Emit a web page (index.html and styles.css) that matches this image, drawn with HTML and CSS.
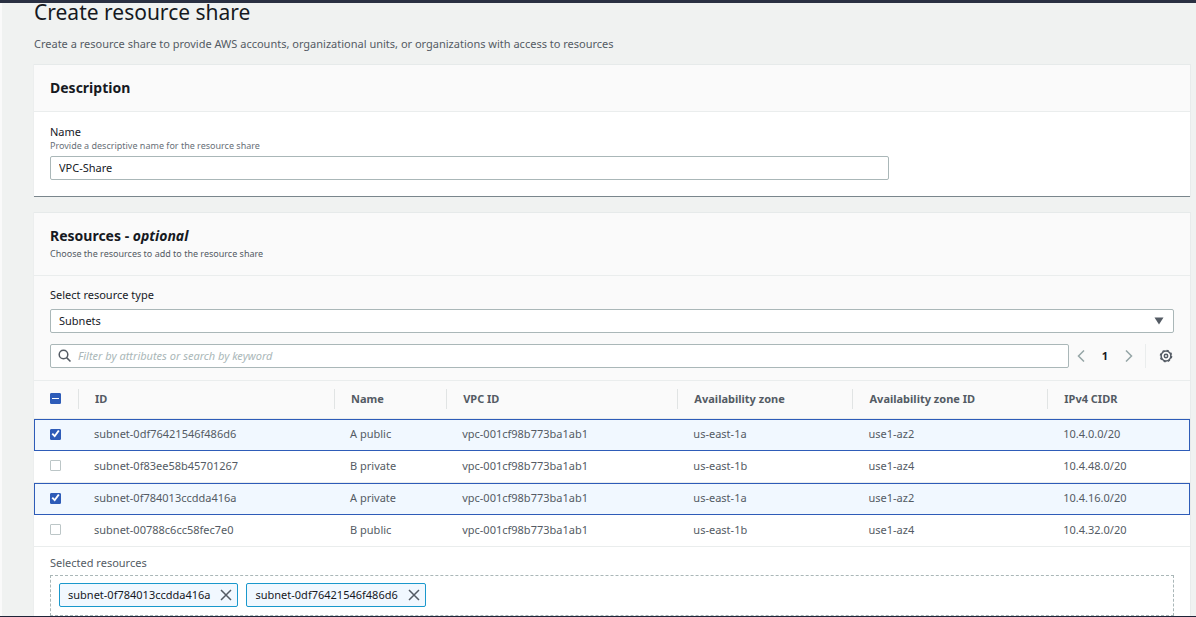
FILE: index.html
```
<!DOCTYPE html>
<html lang="en">
<head>
<meta charset="utf-8">
<title>Create resource share</title>
<link rel="stylesheet" href="styles.css">
</head>
<body>
<main class="page">
  <header class="page-header">
    <h1 class="page-title">Create resource share</h1>
    <p class="page-intro">Create a resource share to provide AWS accounts, organizational units, or organizations with access to resources</p>
  </header>

  <section class="card card-description">
    <div class="card-header">
      <h2 class="card-title">Description</h2>
    </div>
    <div class="card-body">
      <label class="label" for="share-name">Name</label>
      <p class="hint" id="name-hint">Provide a descriptive name for the resource share</p>
      <input class="control name-input" id="share-name" type="text" value="VPC-Share" aria-describedby="name-hint">
    </div>
  </section>

  <section class="card card-resources">
    <div class="card-header card-header-tall">
      <h2 class="card-title">Resources - <em>optional</em></h2>
      <p class="hint hint-dark">Choose the resources to add to the resource share</p>
    </div>
    <div class="tools">
      <label class="label" for="resource-type">Select resource type</label>
      <div class="select-wrap">
        <select class="control select" id="resource-type"><option>Subnets</option></select>
        <svg class="select-arrow" width="10" height="8" viewBox="0 0 10 8" aria-hidden="true"><path d="M.5 .5h9L5 7.500z"/></svg>
      </div>
      <div class="filter-row">
        <div class="search">
          <svg class="search-icon" width="14" height="14" viewBox="0 0 14 14" aria-hidden="true"><circle cx="5.500" cy="5.500" r="4.300"/><path d="M8.600 8.600l3.900 3.900"/></svg>
          <input class="control search-input" type="search" placeholder="Filter by attributes or search by keyword" aria-label="Filter resources">
        </div>
        <nav class="pager" aria-label="Pagination">
          <button class="icon-button arrow" aria-label="Previous page"><svg width="8" height="12" viewBox="0 0 8 12"><path d="M7 .5L1.500 6 7 11.500"/></svg></button>
          <button class="icon-button page-number">1</button>
          <button class="icon-button arrow" aria-label="Next page"><svg width="8" height="12" viewBox="0 0 8 12"><path d="M1 .5L6.500 6 1 11.500"/></svg></button>
        </nav>
        <div class="settings">
          <button class="icon-button gear" aria-label="Preferences"><svg width="14" height="14" viewBox="0 0 14 14"><circle cx="7" cy="7" r="4.900"/><circle class="gear-teeth" cx="7" cy="7" r="5.700"/><circle cx="7" cy="7" r="1.700"/></svg></button>
        </div>
      </div>
    </div>

    <table class="table">
      <colgroup><col class="col-check"><col class="col-id"><col class="col-name"><col class="col-vpc"><col class="col-zone"><col class="col-zone-id"><col></colgroup>
      <thead>
        <tr>
          <th class="check-cell"><input class="check check-mixed" type="checkbox" aria-label="Select all"></th>
          <th><div class="th-label">ID</div></th>
          <th><div class="th-label">Name</div></th>
          <th><div class="th-label">VPC ID</div></th>
          <th><div class="th-label">Availability zone</div></th>
          <th><div class="th-label">Availability zone ID</div></th>
          <th><div class="th-label">IPv4 CIDR</div></th>
        </tr>
      </thead>
      <tbody>
        <tr class="selected"><td class="check-cell"><input class="check" type="checkbox" checked aria-label="Select subnet-0df76421546f486d6"></td><td>subnet-0df76421546f486d6</td><td>A public</td><td>vpc-001cf98b773ba1ab1</td><td>us-east-1a</td><td>use1-az2</td><td>10.4.0.0/20</td></tr>
        <tr><td class="check-cell"><input class="check" type="checkbox" aria-label="Select subnet-0f83ee58b45701267"></td><td>subnet-0f83ee58b45701267</td><td>B private</td><td>vpc-001cf98b773ba1ab1</td><td>us-east-1b</td><td>use1-az4</td><td>10.4.48.0/20</td></tr>
        <tr class="selected"><td class="check-cell"><input class="check" type="checkbox" checked aria-label="Select subnet-0f784013ccdda416a"></td><td>subnet-0f784013ccdda416a</td><td>A private</td><td>vpc-001cf98b773ba1ab1</td><td>us-east-1a</td><td>use1-az2</td><td>10.4.16.0/20</td></tr>
        <tr><td class="check-cell"><input class="check" type="checkbox" aria-label="Select subnet-00788c6cc58fec7e0"></td><td>subnet-00788c6cc58fec7e0</td><td>B public</td><td>vpc-001cf98b773ba1ab1</td><td>us-east-1b</td><td>use1-az4</td><td>10.4.32.0/20</td></tr>
      </tbody>
    </table>

    <div class="selection">
      <h3 class="selection-title">Selected resources</h3>
      <div class="tokens">
        <span class="token">subnet-0f784013ccdda416a<button class="icon-button remove" aria-label="Remove subnet-0f784013ccdda416a"><svg width="12" height="12" viewBox="0 0 12 12"><path d="M1 1l10 10M11 1L1 11"/></svg></button></span>
        <span class="token">subnet-0df76421546f486d6<button class="icon-button remove" aria-label="Remove subnet-0df76421546f486d6"><svg width="12" height="12" viewBox="0 0 12 12"><path d="M1 1l10 10M11 1L1 11"/></svg></button></span>
      </div>
    </div>
  </section>
</main>
</body>
</html>
```
FILE: styles.css
```
* {
  box-sizing: border-box;
}

body {
  margin: 0;
  background: #f0f2f1;
  color: #16191f;
  font: 11px/16px "Noto Sans", "Open Sans", sans-serif;
}

h1, h2, h3, p {
  margin: 0;
}

input, select, button {
  font: inherit;
  color: inherit;
}

.page {
  border-top: 3px solid #2a3042;
  border-bottom: 1px solid #1e2438;
  padding: 0 6px 0 34px;
  background: linear-gradient(90deg, #fafafa 2px, transparent 2px);
}

.page-header {
  padding-bottom: 12px;
}

.page-title {
  margin-bottom: 15px;
  font-size: 21px;
  font-weight: 400;
  line-height: 18px;
}

.page-intro {
  color: #545b64;
}

.card {
  background: #fff;
  border-top: 1px solid #e6eaea;
  box-shadow: 1px 0 0 #e8ebeb, -1px 0 0 #eceeee;
}

.card-description {
  margin-bottom: 15px;
  border-bottom: 1px solid #7a868c;
}

.card-header {
  padding: 13px 16px;
  background: #fafafa;
  border-bottom: 1px solid #eaeded;
}

.card-header-tall {
  padding-bottom: 14px;
}

.card-title {
  font-size: 14px;
  line-height: 20px;
}

.card-header-tall .hint {
  margin-top: 1px;
}

.card-body {
  padding: 12px 16px 16px;
}

.label {
  display: block;
}

.hint {
  margin-bottom: 4px;
  color: #687078;
  font-size: 9px;
  line-height: 12px;
}

.hint-dark {
  margin-bottom: 0;
  color: #545b64;
  line-height: 14px;
}

.control {
  display: block;
  width: 100%;
  height: 24px;
  padding: 0 8px;
  border: 1px solid #aab7b8;
  border-radius: 2px;
  background: #fff;
  outline: 0;
  appearance: none;
}

.name-input {
  width: calc(75% - 4px);
  padding-bottom: 2px;
}

.tools {
  padding: 11px 16px 12px;
  background: #fafafa;
  border-bottom: 1px solid #eaeded;
}

.select-wrap {
  position: relative;
  margin: 6px 0 11px;
}

.select-arrow {
  position: absolute;
  top: 8px;
  right: 10px;
  fill: #545b64;
  pointer-events: none;
}

.filter-row {
  display: flex;
}

.search {
  position: relative;
  flex: 1;
}

.search-icon {
  position: absolute;
  top: 5px;
  left: 8px;
  fill: none;
  stroke: #545b64;
  stroke-width: 1.5;
}

.search-input {
  padding-bottom: 2px;
  padding-left: 27px;
}

.search-input::placeholder {
  color: #aab7b8;
  font-style: italic;
  opacity: 1;
}

.pager {
  display: flex;
  width: 76px;
  padding: 0 12px 0 8px;
  align-items: center;
  justify-content: space-between;
}

.settings {
  display: flex;
  width: 29px;
  padding-right: 1px;
  border-left: 1px solid #eaeded;
  align-items: center;
  justify-content: flex-end;
}

.icon-button {
  display: flex;
  padding: 0;
  border: 0;
  background: none;
}

.icon-button svg {
  display: block;
  fill: none;
  stroke: #545b64;
  stroke-width: 1.5;
}

.icon-button.arrow svg {
  stroke: #95a5a6;
}

.page-number {
  font-weight: 700;
}

.icon-button .gear-teeth {
  stroke-width: 1.2;
  stroke-dasharray: 2.238 2.238;
}

.table {
  width: 100%;
  table-layout: fixed;
  border-collapse: separate;
  border-spacing: 0;
  color: #545b64;
}

.col-check { width: 44px; }
.col-id { width: 22.15%; }
.col-name { width: 9.7%; }
.col-vpc { width: 20%; }
.col-zone { width: 15.15%; }
.col-zone-id { width: 16.85%; }

.table th {
  height: 38px;
  padding: 0 0 2px;
  background: #fafafa;
  border-bottom: 1px solid #eaeded;
  text-align: left;
}

.th-label {
  height: 20px;
  padding-left: 16px;
  border-left: 1px solid #e1e4e4;
  line-height: 20px;
}

.table td {
  height: 32px;
  padding: 0 0 2px 16px;
  border-bottom: 1px solid #eaeded;
}

.selected td {
  background: #f1f8ff;
  border-top: 1px solid #2e5cb8;
  border-bottom-color: #2e5cb8;
}

.selected td:first-child {
  border-left: 1px solid #2e5cb8;
}

.selected td:last-child {
  border-right: 1px solid #2e5cb8;
}

.table .check-cell {
  padding-left: 16px;
}

.table .selected .check-cell {
  padding-left: 15px;
}

.check {
  display: grid;
  width: 11px;
  height: 11px;
  margin: 0;
  border: 1px solid #bcc6c7;
  border-radius: 1px;
  background: #fff;
  appearance: none;
  place-content: center;
}

.check:checked,
.check-mixed {
  border-color: #2e5cb8;
  background: #2e5cb8;
}

.check:checked::before {
  content: "";
  width: 9px;
  height: 9px;
  background: #fff;
  clip-path: polygon(6% 52%, 22% 38%, 40% 58%, 78% 6%, 96% 18%, 42% 90%);
}

.check-mixed::before {
  content: "";
  width: 7px;
  height: 1px;
  background: #fff;
}

.selection {
  padding: 8px 16px 0;
}

.selection-title {
  margin-bottom: 4px;
  color: #545b64;
  font-size: 11px;
  font-weight: 400;
}

.tokens {
  display: flex;
  padding: 7px 8px 8px;
  border: 1px dashed #aab7b8;
  gap: 8px;
}

.token {
  display: flex;
  height: 24px;
  padding: 0 5px 0 8px;
  border: 1px solid #1a98cc;
  border-radius: 2px;
  background: #f1f8ff;
  align-items: center;
  gap: 10px;
}
```
